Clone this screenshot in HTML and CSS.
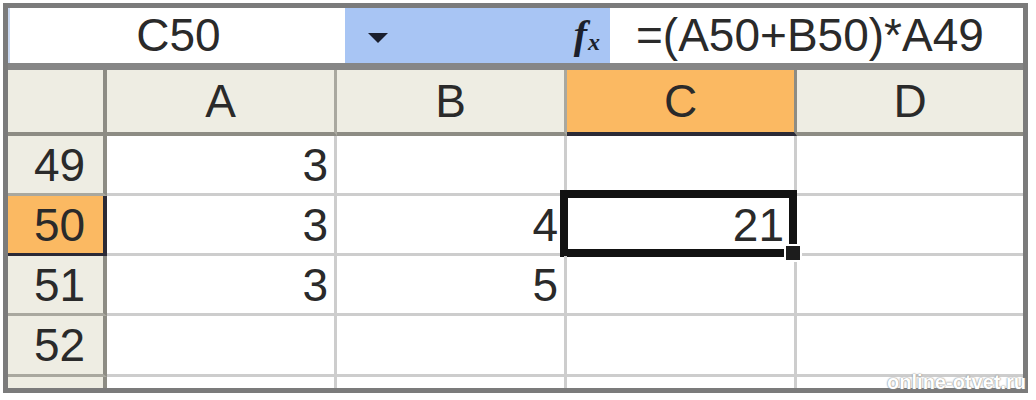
FILE: index.html
```html
<!DOCTYPE html>
<html>
  <head>
    <title>Spreadsheet C50</title>
    <link rel="stylesheet" href="styles.css">
  </head>
  <body>
    <div class="sheet">
      <div class="formula-bar">
        <div class="name-box">C50</div>
        <div class="bar-tools">
          <svg class="dropdown" width="22" height="12" viewBox="0 0 22 12"><polygon points="1,1 21,1 11,11" fill="#1a1f2e"/></svg>
          <span class="fx"><i>f</i><sub>x</sub></span>
        </div>
        <div class="formula">=(A50+B50)*A49</div>
      </div>

      <div class="grid">
        <!-- header row -->
        <div class="head corner"></div>
        <div class="head col-head">A</div>
        <div class="head col-head">B</div>
        <div class="head col-head active">C</div>
        <div class="head col-head last">D</div>

        <!-- row 49 -->
        <div class="head row-head">49</div>
        <div class="cell">3</div>
        <div class="cell"></div>
        <div class="cell"></div>
        <div class="cell last"></div>

        <!-- row 50 -->
        <div class="head row-head active">50</div>
        <div class="cell">3</div>
        <div class="cell">4</div>
        <div class="cell selected">21<span class="fill-handle"></span></div>
        <div class="cell last"></div>

        <!-- row 51 -->
        <div class="head row-head">51</div>
        <div class="cell">3</div>
        <div class="cell">5</div>
        <div class="cell"></div>
        <div class="cell last"></div>

        <!-- row 52 -->
        <div class="head row-head">52</div>
        <div class="cell"></div>
        <div class="cell"></div>
        <div class="cell"></div>
        <div class="cell last"></div>

        <!-- partial row 53 -->
        <div class="head row-head cut"></div>
        <div class="cell cut"></div>
        <div class="cell cut"></div>
        <div class="cell cut"></div>
        <div class="cell cut last"></div>
      </div>

      <span class="watermark">online-otvet.ru</span>
    </div>
  </body>
</html>
```

FILE: styles.css
```css
/* Colours picked from the old Excel look */
:root {
  --frame: #7b7b7b;
  --head-bg: #eeede3;
  --head-line: #8d8c84;
  --grid-line: #cdcdcd;
  --active-bg: #fbb962;
  --active-line: #2b2a36;
  --bar-blue: #a8c5f4;
  --text: #2a2a2a;
}

body {
  margin: 0;
  background: #ffffff;
  font-family: 'Liberation Sans', Arial, sans-serif;
  color: var(--text);
}

.sheet {
  position: relative;
  width: 1015px;
  margin: 3px;
  border: 5px solid var(--frame);
  background: #ffffff;
}

/* Formula bar */
.formula-bar {
  display: flex;
  height: 55px;
  border-bottom: 7px solid #868686;
  font-size: 46px;
  line-height: 55px;
}

.name-box {
  width: 337px;
  padding-left: 2px;
  text-align: center;
  background: #ffffff;
  border-left: 2px solid #c9d8f0;
  box-sizing: border-box;
}

.bar-tools {
  width: 265px;
  background: var(--bar-blue);
  display: flex;
  align-items: center;
  justify-content: space-between;
  padding: 0 10px 0 22px;
  box-sizing: border-box;
}

.dropdown {
  margin-top: 4px;
}

.fx {
  font-family: 'Liberation Serif', 'Times New Roman', serif;
  font-weight: bold;
  font-size: 40px;
  line-height: 1;
  color: #1b1f2c;
  margin-bottom: 2px;
}
.fx sub {
  font-size: 24px;
  font-style: italic;
  vertical-align: -2px;
  margin-left: 1px;
}

.formula {
  flex: 1;
  padding-left: 26px;
  background: #ffffff;
  white-space: nowrap;
}

/* Cell grid */
.grid {
  display: grid;
  grid-template-columns: 99px 230px 230px 230px 226px;
  grid-template-rows: 66px 60px 60px 60px 61px 11px;
  font-size: 46px;
}

.head {
  background: var(--head-bg);
  border-right: 4px solid var(--head-line);
  border-bottom: 4px solid var(--head-line);
  box-sizing: border-box;
  display: flex;
  align-items: center;
  justify-content: center;
}
.head.last {
  border-right: none;
}

.col-head {
  border-right-width: 3px;
  border-right-color: #a9a89f;
}
.col-head.active {
  background: var(--active-bg);
  border-bottom-color: var(--active-line);
  border-right-color: var(--head-line);
}

.row-head {
  padding-left: 8px;
  border-bottom-width: 3px;
  border-bottom-color: #a9a89f;
}
.row-head.active {
  background: var(--active-bg);
  border-right-color: var(--active-line);
  border-bottom-color: var(--active-line);
}
.row-head.cut {
  border-bottom: none;
}

.cell {
  position: relative;
  border-right: 3px solid var(--grid-line);
  border-bottom: 3px solid var(--grid-line);
  box-sizing: border-box;
  display: flex;
  align-items: center;
  justify-content: flex-end;
  padding-right: 6px;
}
.cell.last {
  border-right: none;
}
.cell.cut {
  border-bottom: none;
}

/* Active cell frame */
.cell.selected {
  padding-right: 10px;
}
.cell.selected::after {
  content: '';
  position: absolute;
  top: -6px;
  left: -7px;
  right: -3px;
  bottom: -4px;
  border: 8px solid #121212;
}

.fill-handle {
  position: absolute;
  right: -8px;
  bottom: -9px;
  width: 14px;
  height: 14px;
  background: #1c1c1c;
  border: 2px solid #ffffff;
  z-index: 1;
}

/* Site watermark */
.watermark {
  position: absolute;
  right: -3px;
  bottom: -6px;
  font-size: 20px;
  font-weight: bold;
  color: #ffffff;
  text-shadow: 0 0 2px #8a8a8a, 0 0 1px #8a8a8a;
}
```
